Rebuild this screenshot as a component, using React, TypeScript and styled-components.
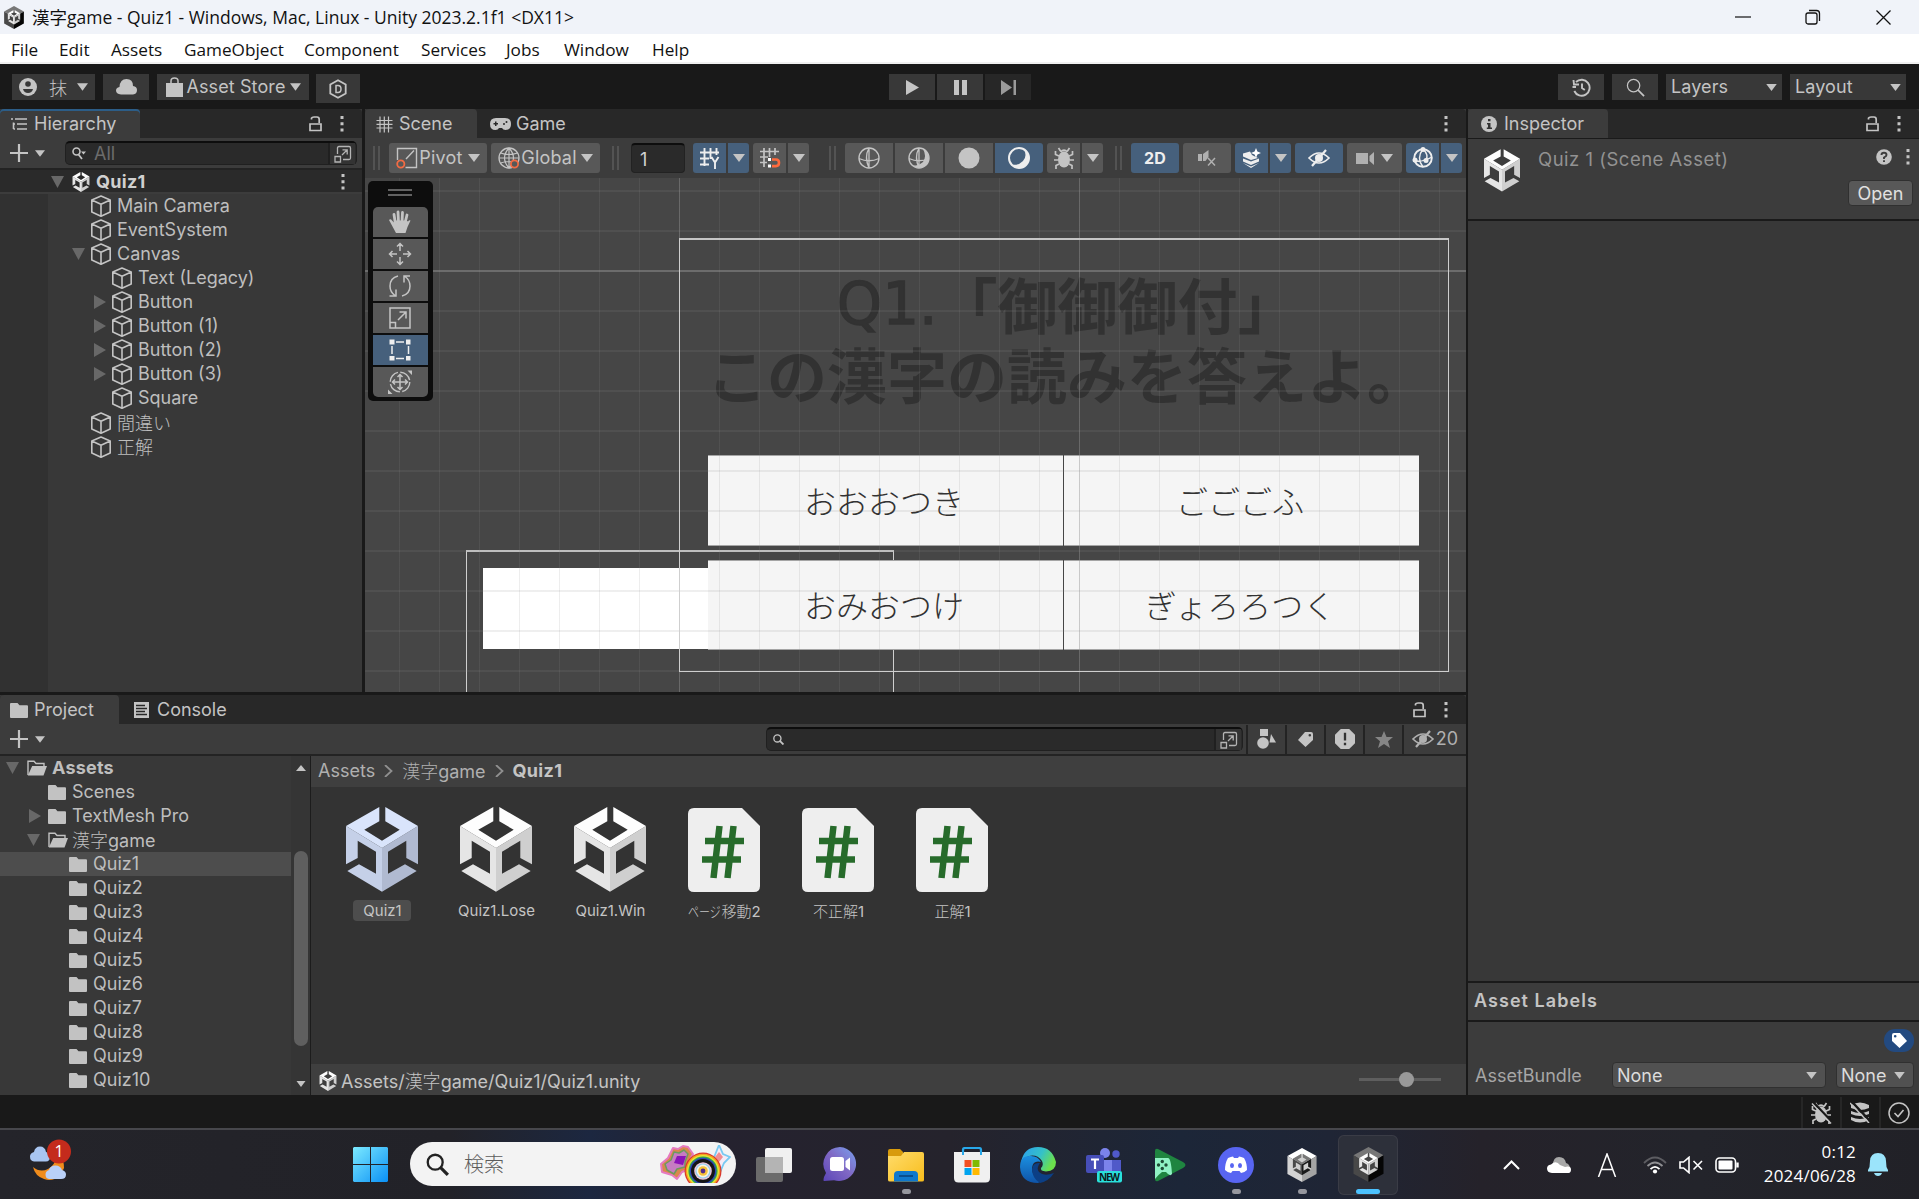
import React from "react";
import styled, { createGlobalStyle, css } from "styled-components";

const UI = `Inter, "Noto Sans CJK JP", sans-serif`;
const WIN = `"Open Sans", "Noto Sans CJK JP", sans-serif`;
const FG = "#c4c4c4";

const Global = createGlobalStyle`
  html, body { margin: 0; padding: 0; background: #191919; overflow: hidden; }
  * { box-sizing: border-box; }
  svg { display: block; flex: none; }
`;

const Screen = styled.div`
  width: 1919px;
  height: 1199px;
  display: flex;
  flex-direction: column;
  overflow: hidden;
  background: #191919;
  color: ${FG};
  font: 18px/24px ${UI};
  white-space: nowrap;
`;

/* ---------- icons ---------- */

type SvgProps = { w: number; h: number; vb?: string; children: React.ReactNode };
const Svg = ({ w, h, vb, children }: SvgProps) => (
  <svg width={w} height={h} viewBox={vb ?? `0 0 ${w} ${h}`} fill="none">
    {children}
  </svg>
);

const cubeTones = {
  blue: ["#d9e4fb", "#c5d0e8", "#b0bad1"],
  white: ["#fdfdfd", "#e5e5e5", "#cfcfcf"],
  dark: ["#777", "#4a4a4a", "#1a1a1a"],
};

const CubeShape = ({ tone }: { tone: keyof typeof cubeTones }) => {
  const [top, left, right] = cubeTones[tone];
  return (
    <>
      <path d="M0 19 36 41V84.7L1.3 64 13 57.3 30 66.7V44.7L11.7 33.7V51L0 57.3Z" fill={left} />
      <path d="M72 19 36 41V84.7L70.7 64 59 57.3 42 66.7V44.7L60.3 33.7V51L72 57.3Z" fill={right} />
      <path d="M33.3 0V14.3L18.3 22.7 36 33.7 53.7 22.7 39.3 14.3V0L72 19 36 41 0 19Z" fill={top} />
    </>
  );
};

const UnityCube = ({ w, h, tone = "white" }: { w: number; h: number; tone?: keyof typeof cubeTones }) => (
  <Svg w={w} h={h} vb="0 0 72 85"><CubeShape tone={tone} /></Svg>
);

const HexLogo = ({ w, h, light }: { w: number; h: number; light?: boolean }) => (
  <Svg w={w} h={h} vb="0 0 72 84">
    <path d="M36 0 72 20 36 42 0 20Z" fill={light ? "#fff" : "#777"} />
    <path d="M0 20 36 42V84L0 64Z" fill={light ? "#d4d4d4" : "#484848"} />
    <path d="M72 20 36 42V84L72 64Z" fill={light ? "#a4a4a4" : "#050505"} />
    <g transform="translate(13.5 14.5) scale(.625)">
      <path d="M0 19 36 0 72 19V64L36 85 0 64Z" fill={light ? "#cfcfcf" : "#444"} />
      <CubeShape tone={light ? "dark" : "white"} />
    </g>
  </Svg>
);

const Caret = ({ w = 12, h = 8, color = FG }: { w?: number; h?: number; color?: string }) => (
  <Svg w={w} h={h} vb="0 0 12 8"><path d="M0 0H12L6 8Z" fill={color} /></Svg>
);

const Fold = ({ open }: { open?: boolean }) =>
  open ? (
    <Svg w={13} h={12}><path d="M0 0H13L6.5 12Z" fill="#686868" /></Svg>
  ) : (
    <Svg w={13} h={14}><path d="M1 0 13 7 1 14Z" fill="#686868" /></Svg>
  );

const Dots = () => (
  <Svg w={4} h={16}><path d="M.5 0h3v3h-3zM.5 6.3h3v3h-3zM.5 12.6h3v3h-3z" fill={FG} /></Svg>
);

const Lock = () => (
  <Svg w={13} h={16}>
    <path d="M2.5 3.5V2.2Q3 1 5 1h3q2.2 0 2.2 2.4V7M1 8h11v6.5H1Z" stroke={FG} strokeWidth="1.7" />
  </Svg>
);

const ObjectCube = () => (
  <Svg w={20} h={22}>
    <path d="M10 1 19.200 5v12L10 21.200 .8 17V5ZM.8 5 10 9.200 19.200 5M10 9.200V21" stroke="#c4c4c4" strokeWidth="1.600" strokeLinejoin="round" />
  </Svg>
);

const Folder = () => (
  <Svg w={18} h={15}><path d="M1 0h6.5l2 2.3H17q1 0 1 1V14q0 1-1 1H1q-1 0-1-1V1q0-1 1-1Z" fill="#c2c2c2" /></Svg>
);

const FolderOpen = () => (
  <Svg w={20} h={16}>
    <path d="M1 15V1.2h6l2 2.3h8V6" stroke="#c2c2c2" strokeWidth="1.4" />
    <path d="M5.2 6H20l-3.5 9.5H.8Z" fill="#c2c2c2" />
  </Svg>
);

const Plus = () => (
  <Svg w={18} h={18}><path d="M9 0V18M0 9H18" stroke={FG} strokeWidth="2.2" /></Svg>
);

const Popout = () => (
  <Svg w={18} h={18}>
    <path d="M3.5 9V3q0-1.5 1.500-1.500H15q1.500 0 1.500 1.500V13q0 1.500-1.500 1.500H9M8 10l5-5M8.500 4.800H13.200V9.500M1 11.500h5.500V17H1Z" stroke="#b4b4b4" strokeWidth="1.3" />
  </Svg>
);

const Lens = ({ w, h = w, color = FG, sw = 1.6 }: { w: number; h?: number; color?: string; sw?: number }) => (
  <Svg w={w} h={h} vb="0 0 20 20">
    <circle cx="8" cy="8" r="6.500" stroke={color} strokeWidth={sw} />
    <path d="M12.500 12.500 19 19" stroke={color} strokeWidth={sw * 1.4} />
  </Svg>
);

const LensMenu = () => (
  <Svg w={14} h={13}>
    <circle cx="4.500" cy="4.500" r="3.500" stroke={FG} strokeWidth="1.600" />
    <path d="M6.500 7.500 10 12" stroke={FG} strokeWidth="1.800" />
    <path d="M9 4.500H14L11.500 7.500Z" fill={FG} />
  </Svg>
);

const HiddenEye = ({ color = FG }: { color?: string }) => (
  <Svg w={22} h={18}>
    <path d="M1 9Q11-1 21 9 11 19 1 9Z" stroke={color} strokeWidth="1.7" />
    <circle cx="11" cy="9" r="4" fill={color} />
    <path d="M4 17 18 1" stroke={color} strokeWidth="2.200" />
  </Svg>
);

const BugIcon = ({ slash }: { slash?: boolean }) => (
  <Svg w={22} h={22}>
    <ellipse cx="11" cy="12.500" rx="6" ry="8" fill={FG} />
    <path d="M7.500 5Q11 1.500 14.500 5M7.500 4 5.500 1M14.500 4 16.500 1M6 9 2.500 7.500V4M16 9 19.500 7.500V4M5.500 13H1M16.500 13H21M6 17 3 18.500V22M16 17 19 18.500V22" stroke={FG} strokeWidth="1.700" />
    {slash && <path d="M4 1 22 20" stroke="#191919" strokeWidth="2.500" />}
    {slash && <path d="M2 1.500 21 21.500" stroke={FG} strokeWidth="1.500" />}
  </Svg>
);

const GridGlyph = () => (
  <Svg w={17} h={17}><path d="M4 .5V16.500M12.500 .5V16.500M.5 4.500H16.500M.5 12H16.500M8.300 .5V16.500M.5 8.300H16.500" stroke={FG} strokeWidth="1.200" /></Svg>
);

const TagIcon = ({ flip, color = FG }: { flip?: boolean; color?: string }) => (
  <Svg w={17} h={17}>
    <path
      transform={flip ? "translate(17 0) scale(-1 1)" : undefined}
      fillRule="evenodd"
      d="M8 1h6q2 0 2 2v6l-7.500 7L1 9ZM11.500 4.300a1.300 1.300 0 1 0 2.600 0 1.300 1.300 0 1 0-2.600 0Z"
      fill={color}
    />
  </Svg>
);

const Globe = ({ mode }: { mode: "wire" | "half" | "solid" | "crescent" }) => (
  <Svg w={22} h={22}>
    {mode === "solid" ? (
      <circle cx="11" cy="11" r="10.500" fill={FG} />
    ) : (
      <>
        <circle cx="11" cy="11" r="10" stroke={mode === "crescent" ? "#eee" : FG} strokeWidth={mode === "crescent" ? 2 : 1.400} />
        {mode !== "crescent" && <path d="M11 1Q6 10 11 21M1 11.500Q11 16 21 11.500M11 1V21" stroke={FG} strokeWidth="1.300" />}
        {mode === "half" && <path d="M15 2Q19 9 15 15 9 20 4.500 18 8 21 11 21 20.500 20 21 11 20 4 15 2Z" fill={FG} />}
        {mode === "crescent" && <path d="M15 1.500Q20 8 15 14 10 19 4 17.500 7 21 11 21 20.500 20 21 11 20.500 4 15 1.500Z" fill="#eee" />}
      </>
    )}
  </Svg>
);

/* ---------- window chrome ---------- */

const TitleBar = styled.div`
  height: 34px;
  display: flex;
  align-items: center;
  background: #f0f3f9;
  color: #111;
  padding-left: 4px;
  font: 17.500px/34px ${WIN};
`;
const TitleText = styled.span`
  margin-left: 8px;
  flex: 1;
`;
const WindowControl = styled.div`
  width: 70px;
  display: flex;
  justify-content: center;
  padding-right: 2px;
`;
const MenuBar = styled.div`
  height: 30px;
  display: flex;
  gap: 22px;
  padding-left: 11px;
  background: #fff;
  border-bottom: 2px solid #f0f0f0;
  color: #111;
  font: 17.200px/31px ${WIN};
`;
const MenuItem = styled.span<{ $w: number }>`
  width: ${(p) => p.$w}px;
`;

const MainToolbar = styled.div`
  height: 45px;
  padding: 10px 0 0 12px;
  display: flex;
  align-items: flex-start;
`;
const ToolButton = styled.div<{ $w: number; $ml?: number; $h?: number; $dim?: boolean; $pad?: boolean }>`
  width: ${(p) => p.$w}px;
  height: ${(p) => p.$h ?? 26}px;
  margin-left: ${(p) => p.$ml ?? 0}px;
  background: ${(p) => (p.$dim ? "#272727" : "#383838")};
  display: flex;
  align-items: center;
  justify-content: ${(p) => (p.$pad ? "space-between" : "center")};
  padding: ${(p) => (p.$pad ? "0 5px" : "0")};
  letter-spacing: 0.100px;
  gap: 4px;
`;
const Cjk = styled.span`
  font-family: "Noto Sans CJK JP", sans-serif;
  font-weight: 300;
`;
const NarrowKana = styled(Cjk)`
  display: inline-block;
  width: 45px;
  margin-right: -12px;
  transform: scaleX(0.730);
  transform-origin: left;
`;

/* ---------- docking areas ---------- */

const Workspace = styled.div`
  height: 986px;
  display: grid;
  grid-template-columns: 1466px 451px;
  column-gap: 2px;
`;
const LeftColumn = styled.div`
  display: grid;
  grid-template-rows: 583px 400px;
  row-gap: 3px;
`;
const TopRow = styled.div`
  display: grid;
  grid-template-columns: 362px 1101px;
  column-gap: 3px;
`;
const Panel = styled.section`
  display: flex;
  flex-direction: column;
  min-width: 0;
  min-height: 0;
  background: #383838;
  overflow: hidden;
`;
const TabStrip = styled.div`
  height: 29px;
  flex: none;
  display: flex;
  background: #282828;
  border-radius: 4px 4px 0 0;
  padding-right: 13px;
`;
const Tab = styled.div<{ $w: number; $active?: boolean; $focus?: boolean; $gap?: number; $pl: number }>`
  width: ${(p) => p.$w}px;
  padding: 1px 0 0 ${(p) => p.$pl}px;
  display: flex;
  align-items: center;
  gap: ${(p) => p.$gap ?? 8}px;
  border-radius: 4px 4px 0 0;
  ${(p) => p.$active && css`background: #3c3c3c;`}
  ${(p) => p.$focus && css`box-shadow: inset 0 2px #2c5d87;`}
`;
const TabActions = styled.div`
  margin-left: auto;
  display: flex;
  align-items: center;
  gap: 16px;
`;

/* ---------- hierarchy ---------- */

const PanelToolbar = styled.div<{ $h: number; $pl: number }>`
  height: ${(p) => p.$h}px;
  flex: none;
  padding-left: ${(p) => p.$pl}px;
  display: flex;
  align-items: center;
  background: #3c3c3c;
  border-bottom: 2px solid #232323;
`;
const SearchField = styled.div<{ $w: number; $ml: number }>`
  width: ${(p) => p.$w}px;
  height: 24px;
  margin-left: ${(p) => p.$ml}px;
  display: flex;
  align-items: center;
  gap: 8px;
  padding: 0 4px 0 6px;
  background: #2a2a2a;
  border: 1px solid #202020;
  border-top: 2px solid #0d0d0d;
  border-radius: 5px;
  color: #6c6c6c;
`;
const SearchEnd = styled.div`
  margin: 0 -3px 0 auto;
  height: 21px;
  width: 27px;
  border-left: 2px solid #202020;
  background: #333;
  display: flex;
  align-items: center;
  justify-content: center;
`;
const Spaced = styled.span<{ $ml: number }>`
  margin-left: ${(p) => p.$ml}px;
  display: inline-flex;
`;
const HierarchyTree = styled.div`
  flex: 1;
  background: linear-gradient(90deg, #313131 48px, #383838 48px);
`;
const TreeRow = styled.div<{ $indent: number; $tall?: boolean; $selected?: boolean }>`
  height: ${(p) => (p.$tall ? 25 : 24)}px;
  padding-left: ${(p) => p.$indent}px;
  display: flex;
  align-items: center;
  color: #bebebe;
  ${(p) => p.$selected && css`background: #4d4d4d;`}
`;
const FoldSlot = styled.span<{ $w: number }>`
  width: ${(p) => p.$w}px;
  flex: none;
  display: flex;
`;
const RowLabel = styled.span<{ $ml?: number; $bold?: boolean; $ls?: number }>`
  margin-left: ${(p) => p.$ml ?? 6}px;
  font-weight: ${(p) => (p.$bold ? 700 : 400)};
  letter-spacing: ${(p) => p.$ls ?? 0}px;
`;
const SceneHeader = styled.div`
  height: 24px;
  flex: none;
  display: flex;
  align-items: center;
  padding: 1px 17px 0 51px;
  background: #2a2a2a;
  border-bottom: 2px solid #3c3c3c;
  color: #d0d0d0;
`;

/* ---------- scene ---------- */

const SceneTools = styled.div`
  height: 40px;
  flex: none;
  display: flex;
  align-items: center;
  padding: 0 0 0 8px;
  background: #3c3c3c;
`;
const Handle = styled.div<{ $ml?: number }>`
  width: 7px;
  height: 24px;
  margin-left: ${(p) => p.$ml ?? 0}px;
  border: solid #535353;
  border-width: 0 2px;
`;
const SceneButton = styled.div<{ $w: number; $ml: number; $on?: boolean; $r?: string; $gap?: number }>`
  width: ${(p) => p.$w}px;
  height: 30px;
  margin-left: ${(p) => p.$ml}px;
  border-radius: ${(p) => p.$r ?? "3px"};
  background: ${(p) => (p.$on ? "#46607c" : "#585858")};
  display: flex;
  align-items: center;
  justify-content: center;
  gap: ${(p) => p.$gap ?? 1}px;
  letter-spacing: 0.200px;
  flex: none;
`;
const NumberField = styled.div`
  width: 54px;
  height: 30px;
  margin-left: 12px;
  padding-left: 8px;
  border-radius: 4px;
  border: 1px solid #222;
  border-top: 2px solid #0d0d0d;
  background: #2a2a2a;
  color: #d2d2d2;
  line-height: 29px;
`;
const TwoD = styled.span`
  font-size: 16px;
  font-weight: 700;
  color: #eee;
`;
const SceneView = styled.div`
  flex: 1;
  position: relative;
  overflow: hidden;
  background: #464646;
`;
const at = css<{ $x: number; $y: number; $w: number; $h: number }>`
  position: absolute;
  left: ${(p) => p.$x}px;
  top: ${(p) => p.$y}px;
  width: ${(p) => p.$w}px;
  height: ${(p) => p.$h}px;
`;
const Outline = styled.div`
  ${at}
  border: 1px solid #cfcfcf;
  border-top: 2px solid #c6c6c6;
`;
const Sprite = styled.div`
  ${at}
  background: #fff;
`;
const AnswerButton = styled.div`
  ${at}
  background: #f5f5f5;
  border: 1px solid #a5a5a5;
  border-width: 1px 0;
  display: flex;
  align-items: center;
  justify-content: center;
  padding: 0 3px 2px 0;
  color: #323232;
  font: 300 32px/40px "Noto Sans CJK JP", sans-serif;
`;
const Question = styled.div`
  ${at}
  display: flex;
  flex-direction: column;
  align-items: center;
  color: #323232;
  font: 700 60px/70px "Noto Sans CJK JP", sans-serif;
`;
const QuestionLine = styled.div`
  height: 70px;
  display: flex;
`;
const Latin = styled.span`
  font: 400 58px/72px "DejaVu Sans", sans-serif;
  -webkit-text-stroke: 1.300px #323232;
`;
const GridOverlay = styled.div`
  position: absolute;
  inset: 0;
  background:
    linear-gradient(rgba(150, 150, 150, 0.4) 2px, transparent 2px) 0 92px / 100% 2000px no-repeat,
    linear-gradient(90deg, rgba(150, 150, 150, 0.35) 1px, transparent 1px) 314px 0 / 400px 100%,
    linear-gradient(rgba(140, 140, 140, 0.140) 2px, transparent 2px) 0 12px / 100% 40px,
    linear-gradient(90deg, rgba(140, 140, 140, 0.150) 1px, transparent 1px) 34px 0 / 40px 100%;
`;
const ToolPalette = styled.div`
  position: absolute;
  left: 3px;
  top: 3px;
  width: 65px;
  height: 220px;
  padding: 8px 5px 4px;
  border-radius: 5px;
  background: #0d0d0d;
  display: flex;
  flex-direction: column;
  gap: 2px;
`;
const Grip = styled.div`
  width: 24px;
  height: 7px;
  margin: 0 0 9px 15px;
  border: solid #626262;
  border-width: 2px 0;
`;
const PaletteTool = styled.div<{ $on?: boolean; $first?: boolean; $last?: boolean }>`
  height: 30px;
  display: flex;
  align-items: center;
  justify-content: center;
  padding-right: 2px;
  background: ${(p) => (p.$on ? "#46607c" : "#585858")};
  border-radius: ${(p) => (p.$first ? "5px 5px 0 0" : p.$last ? "0 0 5px 5px" : "0")};
`;

/* ---------- project ---------- */

const ProjectBody = styled.div`
  flex: 1;
  display: grid;
  grid-template-columns: 291px 20px 1fr;
  min-height: 0;
`;
const FolderTree = styled.div`
  overflow: hidden;
`;
const ScrollTrack = styled.div`
  display: flex;
  flex-direction: column;
  align-items: center;
  background: #353535;
  border-right: 1px solid #1c1c1c;
  padding: 9px 0 8px;
`;
const ScrollThumb = styled.div`
  width: 14px;
  height: 195px;
  border-radius: 7px;
  margin: 80px 0 auto;
  background: #5f5f5f;
`;
const Browser = styled.div`
  display: grid;
  grid-template-rows: 31px 1fr 31px;
  background: #333;
`;
const Crumbs = styled.div`
  display: flex;
  align-items: center;
  padding: 0 0 2px 7px;
  gap: 9px;
  background: #3f3f3f;
  color: #b0b0b0;
`;
const Strong = styled.span`
  font-weight: 700;
  letter-spacing: 0.300px;
  color: #c4c4c4;
`;
const AssetGrid = styled.div`
  display: flex;
  padding: 20px 0 0 14px;
`;
const Asset = styled.div`
  width: 114px;
  display: flex;
  flex-direction: column;
  align-items: center;
  gap: 8px;
`;
const AssetLabel = styled.span<{ $selected?: boolean }>`
  padding: 0 9px 0 10px;
  border-radius: 4px;
  font-size: 15px;
  line-height: 21px;
  background: ${(p) => (p.$selected ? "#4d4d4d" : "transparent")};
`;
const PathBar = styled.div`
  display: flex;
  align-items: center;
  padding: 3px 25px 0 8px;
  gap: 4px;
  background: #3f3f3f;
`;
const Slider = styled.div`
  width: 82px;
  height: 3px;
  margin: -3px 0 0 auto;
  padding-left: 40px;
  background: #5e5e5e;
  display: flex;
  align-items: center;
`;
const Knob = styled.div`
  width: 15px;
  height: 15px;
  border-radius: 50%;
  background: #999;
`;
const FilterButton = styled.div<{ $w: number }>`
  width: ${(p) => p.$w}px;
  height: 29px;
  flex: none;
  display: flex;
  align-items: center;
  justify-content: center;
  gap: 2px;
  border-left: 2px solid #232323;
  color: #b0b0b0;
`;

/* ---------- inspector ---------- */

const InspectorHeader = styled.div`
  height: 83px;
  flex: none;
  display: flex;
  background: #3c3c3c;
  border: solid #1a1a1a;
  border-width: 1px 0 2px 0;
  padding: 10px 0 0 16px;
`;
const InspectorTitle = styled.div`
  margin: -2px 0 0 18px;
  color: #929292;
  font-size: 18.500px;
  letter-spacing: 0.500px;
`;
const HeaderSide = styled.div`
  margin-left: auto;
  width: 71px;
  display: flex;
  flex-direction: column;
  gap: 15px;
`;
const HeaderIcons = styled.div`
  display: flex;
  justify-content: flex-end;
  gap: 14px;
  padding-right: 9px;
  height: 16px;
`;
const OpenButton = styled.div`
  width: 65px;
  height: 26px;
  border-radius: 4px;
  border: 1px solid #303030;
  background: #585858;
  color: #e0e0e0;
  text-align: center;
  line-height: 26px;
`;
const InspectorSpace = styled.div`
  flex: 1;
`;
const LabelsHeader = styled.div`
  height: 41px;
  border: solid #1a1a1a;
  border-width: 2px 0;
  background: #3c3c3c;
  padding-left: 6px;
  font-weight: 600;
  letter-spacing: 1.050px;
  line-height: 36px;
`;
const LabelsBody = styled.div`
  height: 73px;
  background: #3c3c3c;
  padding: 7px 5px 0 7px;
  display: flex;
  flex-direction: column;
`;
const TagBadge = styled.div`
  width: 30px;
  height: 23px;
  align-self: flex-end;
  border-radius: 11px;
  background: #234a80;
  display: flex;
  align-items: center;
  justify-content: center;
`;
const BundleRow = styled.div`
  display: flex;
  align-items: center;
  margin-top: 10px;
  color: #a6a6a6;
`;
const Select = styled.div<{ $w: number; $ml: number }>`
  width: ${(p) => p.$w}px;
  margin-left: ${(p) => p.$ml}px;
  height: 26px;
  border: 1px solid #303030;
  border-radius: 4px;
  background: #515151;
  color: #dcdcdc;
  display: flex;
  align-items: center;
  justify-content: space-between;
  padding: 1px 8px 0 4px;
`;
const BundleName = styled.span`
  width: 106px;
  padding-top: 2px;
`;

const StatusBar = styled.div`
  height: 35px;
  flex: none;
  display: flex;
  justify-content: flex-end;
  border-bottom: 2px solid #47474c;
  padding: 2px 1px 0 0;
`;
const StatusCell = styled.div`
  width: 39px;
  display: flex;
  align-items: center;
  justify-content: center;
  padding-right: 2px;
  border-left: 2px solid #262626;
`;

/* ---------- taskbar ---------- */

const Taskbar = styled.div`
  height: 69px;
  flex: none;
  display: flex;
  align-items: center;
  background: linear-gradient(90deg, #24242a 0, #222228 450px, #1c2740 590px, #25222f 720px, #25232c 950px, #1c2638 1180px, #1f2535 1330px, #25222a 1480px, #23242b 1700px, #212127 1919px);
  color: #fff;
`;
const WeatherSlot = styled.div`
  width: 337px;
  height: 60px;
  padding: 3px 0 0 30px;
  display: flex;
`;
const TaskSlot = styled.div<{ $w?: number }>`
  width: ${(p) => p.$w ?? 66}px;
  height: 60px;
  padding-top: 6px;
  display: grid;
  grid-template-rows: 48px 5px;
  justify-items: center;
  align-items: center;
`;
const ActiveSlot = styled(TaskSlot)`
  width: 60px;
  margin: 0 3px;
  border-radius: 6px;
  background: #2d303a;
  box-shadow: inset 0 0 0 1px #3a3c46;
`;
const RunMark = styled.div<{ $active?: boolean }>`
  width: ${(p) => (p.$active ? 24 : 9)}px;
  height: 5px;
  border-radius: 3px;
  background: ${(p) => (p.$active ? "#4cc2ff" : "#96979e")};
`;
const SearchPill = styled.div`
  width: 326px;
  height: 44px;
  margin: 0 5px 1px 6px;
  border-radius: 22px;
  background: #f3f3f3;
  display: flex;
  align-items: center;
  padding: 0 5px 0 16px;
  color: #5c5c5c;
  font: 300 20px/44px "Noto Sans CJK JP", sans-serif;
`;
const PillText = styled.span`
  margin: 0 auto 0 15px;
`;
const TrayCell = styled.div<{ $w: number; $ml?: number }>`
  width: ${(p) => p.$w}px;
  margin-left: ${(p) => p.$ml ?? 0}px;
  display: flex;
  justify-content: center;
`;
const Clock = styled.div`
  width: 111px;
  text-align: right;
  padding-bottom: 2px;
  font: 17px/24px ${WIN};
  letter-spacing: 0.200px;
`;

/* ---------- data ---------- */

const menu: [string, number][] = [
  ["File", 26], ["Edit", 30], ["Assets", 51], ["GameObject", 98], ["Component", 95],
  ["Services", 63], ["Jobs", 36], ["Window", 66], ["Help", 40],
];

type Node = { label: string; depth: number; fold?: "open" | "closed"; cjk?: boolean; tall?: boolean };
const nodes: Node[] = [
  { label: "Main Camera", depth: 0 },
  { label: "EventSystem", depth: 0 },
  { label: "Canvas", depth: 0, fold: "open" },
  { label: "Text (Legacy)", depth: 1 },
  { label: "Button", depth: 1, fold: "closed" },
  { label: "Button (1)", depth: 1, fold: "closed" },
  { label: "Button (2)", depth: 1, fold: "closed" },
  { label: "Button (3)", depth: 1, fold: "closed" },
  { label: "Square", depth: 1 },
  { label: "間違い", depth: 0, cjk: true, tall: true },
  { label: "正解", depth: 0, cjk: true },
];

const quizFolders = Array.from({ length: 10 }, (_, i) => `Quiz${i + 1}`);

const assets: { label: React.ReactNode; kind: "scene" | "script"; selected?: boolean }[] = [
  { label: "Quiz1", kind: "scene", selected: true },
  { label: "Quiz1.Lose", kind: "scene" },
  { label: "Quiz1.Win", kind: "scene" },
  { label: <><NarrowKana>ページ</NarrowKana><Cjk>移動</Cjk>2</>, kind: "script" },
  { label: <><Cjk>不正解</Cjk>1</>, kind: "script" },
  { label: <><Cjk>正解</Cjk>1</>, kind: "script" },
];

const rings: [string, number][] = [
  ["#d8352d", 18.5], ["#f5a11e", 17.3], ["#e8e337", 16], ["#35a84c", 14.6], ["#2d45b8", 13.3],
  ["#151515", 12], ["#f2c4d8", 8.8], ["#8fd0f0", 7.6], ["#f7f3e6", 6.4], ["#f5c23c", 4.8], ["#512b8c", 2.4],
];

/* ---------- sections ---------- */

const TopToolbar = () => (
  <MainToolbar>
    <ToolButton $w={83}>
      <Svg w={18} h={18}>
        <circle cx="9" cy="9" r="9" fill={FG} />
        <circle cx="9" cy="6" r="2.800" fill="#383838" />
        <path d="M4 11h10q-1 4-5 4t-5-4Z" fill="#383838" />
      </Svg>
      <Spaced $ml={8}><Cjk>抹</Cjk></Spaced>
      <Spaced $ml={6}><Caret w={11} /></Spaced>
    </ToolButton>
    <ToolButton $w={46} $ml={8}>
      <Svg w={21} h={16}><path d="M5 15.500Q0 15 0 11.500 0 8.500 3.500 8 4 0 10.500 0 17 0 17 7q4 .5 4 4 0 4-4 4.500Z" fill={FG} /></Svg>
    </ToolButton>
    <ToolButton $w={152} $ml={8}>
      <Svg w={17} h={20}><path d="M0 6H17V20H0Z" fill={FG} /><path d="M5 9V4q0-3 3.500-3T12 4V9" stroke={FG} strokeWidth="1.500" /></Svg>
      <span>Asset Store</span>
      <Caret w={11} />
    </ToolButton>
    <ToolButton $w={44} $ml={7} $h={29}>
      <Svg w={18} h={20}>
        <path d="M9 1.200 16.700 5.500v9L9 18.800 1.300 14.500v-9Z" stroke={FG} strokeWidth="1.800" />
        <path d="M7 6.500h2q3 0 3 3.500t-3 3.500H7Z" stroke={FG} strokeWidth="1.500" />
      </Svg>
    </ToolButton>
    <ToolButton $w={46} $ml={529}><Svg w={13} h={15}><path d="M0 0 13 7.500 0 15Z" fill={FG} /></Svg></ToolButton>
    <ToolButton $w={46} $ml={2}><Svg w={13} h={15}><path d="M0 0h5v15H0ZM8 0h5v15H8Z" fill={FG} /></Svg></ToolButton>
    <ToolButton $w={46} $ml={2} $dim><Svg w={15} h={15}><path d="M0 0 11 7.500 0 15ZM12.500 0H15v15h-2.500Z" fill="#9a9a9a" /></Svg></ToolButton>
    <ToolButton $w={46} $ml={527}>
      <Svg w={19} h={19}><path d="M4 4A8 8 0 1 1 2.300 13M1.500 2 2 6.500H7M.5 9H4M10 5.500V10L12.800 12" stroke={FG} strokeWidth="1.900" /></Svg>
    </ToolButton>
    <ToolButton $w={46} $ml={8}><Lens w={19} sw={1.300} /></ToolButton>
    <ToolButton $w={116} $ml={8} $pad>Layers<Caret w={11} h={7} /></ToolButton>
    <ToolButton $w={116} $ml={8} $pad>Layout<Caret w={11} h={7} /></ToolButton>
  </MainToolbar>
);

const Hierarchy = () => (
  <Panel>
    <TabStrip>
      <Tab $w={140} $pl={11} $active $focus $gap={7}>
        <Svg w={16} h={14}><path d="M4 2H16M6 7H16M6 12H16M0 2H2M2.500 5.500V12M2.500 7H4M2.500 12H4" stroke={FG} strokeWidth="1.600" /></Svg>
        Hierarchy
      </Tab>
      <TabActions><Lock /><Spaced $ml={2}><Dots /></Spaced></TabActions>
      <Spaced $ml={5} />
    </TabStrip>
    <PanelToolbar $h={32} $pl={10}>
      <Plus />
      <Spaced $ml={7}><Caret w={10} h={7} /></Spaced>
      <SearchField $w={292} $ml={20}>
        <LensMenu />
        All
        <SearchEnd><Popout /></SearchEnd>
      </SearchField>
    </PanelToolbar>
    <SceneHeader>
      <FoldSlot $w={21}><Fold open /></FoldSlot>
      <UnityCube w={18} h={20} />
      <RowLabel $bold $ls={0.3}>Quiz1</RowLabel>
      <TabActions><Dots /></TabActions>
    </SceneHeader>
    <HierarchyTree>
      {nodes.map((n) => (
        <TreeRow key={n.label} $indent={72 + n.depth * 21} $tall={n.tall}>
          <FoldSlot $w={19}>{n.fold && <Fold open={n.fold === "open"} />}</FoldSlot>
          <ObjectCube />
          <RowLabel>{n.cjk ? <Cjk>{n.label}</Cjk> : n.label}</RowLabel>
        </TreeRow>
      ))}
    </HierarchyTree>
  </Panel>
);

const SceneToolbar = () => (
  <SceneTools>
    <Handle />
    <SceneButton $w={98} $ml={9}>
      <Svg w={22} h={22}>
        <path d="M1.500 13V1.500H20.500V20.500H9.500M10 12 18 3.500" stroke={FG} strokeWidth="1.400" />
        <circle cx="4.800" cy="17" r="3.600" stroke="#f26b43" strokeWidth="1.800" />
      </Svg>
      Pivot<Spaced $ml={4}><Caret /></Spaced>
    </SceneButton>
    <SceneButton $w={109} $ml={4}>
      <Svg w={22} h={22}>
        <circle cx="11" cy="11" r="10" stroke={FG} strokeWidth="1.300" />
        <path d="M1 11H21M11 1V21M2.500 6Q11 9 19.500 6M2.500 16Q11 13 19.500 16M11 1Q2 11 11 21M11 1Q20 11 11 21" stroke={FG} strokeWidth="1.200" />
        <circle cx="16.500" cy="17" r="3.600" stroke="#f26b43" strokeWidth="1.800" fill="#585858" />
      </Svg>
      Global<Spaced $ml={3}><Caret /></Spaced>
    </SceneButton>
    <Handle $ml={12} />
    <NumberField>1</NumberField>
    <SceneButton $w={33} $ml={8} $on $r="3px 0 0 3px">
      <Svg w={22} h={22}><path d="M5.500 1V19M11.500 1V12M17.500 1V8M1 5.500H20M1 11.500H10M1 17.500H10M12.500 10 16 15.500 19.500 10M16 15.500V22" stroke="#eee" strokeWidth="1.900" /></Svg>
    </SceneButton>
    <SceneButton $w={21} $ml={2} $on $r="0 3px 3px 0"><Caret /></SceneButton>
    <SceneButton $w={33} $ml={4} $r="3px 0 0 3px">
      <Svg w={22} h={22}>
        <path d="M5 1V20M10.500 1V10M16 1V8M1 4.500H20M1 10H9M1 15.500H8" stroke={FG} strokeWidth="1.700" />
        <path d="M13 12.500h4q3 0 3 3.300t-3 3.300h-4" stroke="#ff6a3d" strokeWidth="2.600" />
        <path d="M9 11h3v3H9ZM9 17.500h3v3H9Z" fill="#fff" />
      </Svg>
    </SceneButton>
    <SceneButton $w={21} $ml={2} $r="0 3px 3px 0"><Caret /></SceneButton>
    <Handle $ml={20} />
    <SceneButton $w={48} $ml={9} $r="3px 0 0 3px"><Globe mode="wire" /></SceneButton>
    <SceneButton $w={48} $ml={2} $r="0"><Globe mode="half" /></SceneButton>
    <SceneButton $w={48} $ml={2} $r="0"><Globe mode="solid" /></SceneButton>
    <SceneButton $w={48} $ml={2} $on $r="0 3px 3px 0"><Globe mode="crescent" /></SceneButton>
    <SceneButton $w={33} $ml={4} $r="3px 0 0 3px"><BugIcon /></SceneButton>
    <SceneButton $w={21} $ml={2} $r="0 3px 3px 0"><Caret /></SceneButton>
    <Handle $ml={12} />
    <SceneButton $w={48} $ml={9} $on><TwoD>2D</TwoD></SceneButton>
    <SceneButton $w={48} $ml={4}>
      <Svg w={18} h={17}><path d="M0 4h4v7H0ZM5 4 10.500 0V7L7.500 11H5Z" fill="#b0b0b0" /><path d="M10 8 17 15.500M17 8 10 15.500" stroke="#b0b0b0" strokeWidth="1.500" /></Svg>
    </SceneButton>
    <SceneButton $w={33} $ml={4} $on $r="3px 0 0 3px">
      <Svg w={20} h={20}>
        <path d="M1 5.500 8 3.500 10 7 16 10 9 12 1 8.500ZM1 10.500l8 3 8-3v3L9 17 1 13.500ZM1 15l8 3.500L17 15 9 20Z" fill="#eee" />
        <path d="M14 0l1.400 3.600L19 5l-3.600 1.400L14 10l-1.400-3.600L9 5l3.600-1.400Z" fill="#fff" />
      </Svg>
    </SceneButton>
    <SceneButton $w={21} $ml={2} $on $r="0 3px 3px 0"><Caret /></SceneButton>
    <SceneButton $w={48} $ml={4} $on><HiddenEye color="#eee" /></SceneButton>
    <SceneButton $w={55} $ml={4} $gap={7}>
      <Svg w={18} h={13}><path d="M0 1h12v11H0ZM13.500 4 18 0V13L13.500 9Z" fill="#b0b0b0" /></Svg>
      <Caret />
    </SceneButton>
    <SceneButton $w={33} $ml={4} $on $r="3px 0 0 3px">
      <Svg w={22} h={22}>
        <circle cx="11" cy="11" r="8.800" stroke="#eee" strokeWidth="1.900" />
        <path d="M11 2Q4 11 11 20M11 2Q17 8 14 13M2 13.500Q9 16 20 10" stroke="#eee" strokeWidth="1.400" />
        <circle cx="11" cy="2.500" r="2.500" fill="#eee" /><circle cx="3" cy="13" r="2.500" fill="#eee" /><circle cx="14" cy="13.500" r="2.500" fill="#eee" />
      </Svg>
    </SceneButton>
    <SceneButton $w={21} $ml={2} $on $r="0 3px 3px 0"><Caret /></SceneButton>
  </SceneTools>
);

const Palette = () => (
  <ToolPalette>
    <Grip />
    <PaletteTool $first>
      <Svg w={24} h={24}>
        <path d="M7.500 14 6 4.500M10.500 12 10 2M14 12 14.500 2.500M17 13 19 5" stroke={FG} strokeWidth="2.800" strokeLinecap="round" />
        <path d="M1 10Q2.500 8.500 4 10.500L6.500 13V10.500H18.300L20 11.500Q21.500 9.500 22.500 10.500L19.500 17 17.500 23H8Z" fill={FG} />
      </Svg>
    </PaletteTool>
    <PaletteTool>
      <Svg w={24} h={24}><path d="M12 9V2M9 4.500 12 1.500 15 4.500M12 15V22M9 19.500 12 22.500 15 19.500M9 12H2M4.500 9 1.500 12 4.500 15M15 12H22M19.500 9 22.500 12 19.500 15" stroke={FG} strokeWidth="1.500" /></Svg>
    </PaletteTool>
    <PaletteTool>
      <Svg w={24} h={24}><path d="M10 2Q2 4 2 12 2 18 7 21.500M1.500 22H8V15.500M14 22Q22 20 22 12 22 6 17 2.500M22 2H16V8.500" stroke={FG} strokeWidth="1.500" /></Svg>
    </PaletteTool>
    <PaletteTool>
      <Svg w={22} h={22}><path d="M1 1H21V21H1ZM1 15.500H6.500V21M9 13 16.500 5.500M10.500 5H17V11.500" stroke={FG} strokeWidth="1.500" /></Svg>
    </PaletteTool>
    <PaletteTool $on>
      <Svg w={22} h={22}><path d="M7 3H15M7 19.500H15M3 7V15M19.500 7V15" stroke="#eee" strokeWidth="1.500" /><path d="M.5 .5h5v5h-5ZM17 .5h4.500v5H17ZM.5 17h5v4.500h-5ZM17 17h4.500v4.500H17Z" fill="#eee" /></Svg>
    </PaletteTool>
    <PaletteTool $last>
      <Svg w={24} h={24}>
        <circle cx="12" cy="12" r="9.800" stroke={FG} strokeWidth="1.400" strokeDasharray="13 2.400" />
        <path d="M12 5V19M5 12H19M9.500 7 12 4.500 14.500 7M9.500 17 12 19.500 14.500 17M7 9.500 4.500 12 7 14.500M17 9.500 19.500 12 17 14.500" stroke={FG} strokeWidth="1.500" />
        <path d="M19.500 .5H24V5ZM0 19.500V24H4.500Z" fill={FG} />
      </Svg>
    </PaletteTool>
  </ToolPalette>
);

const Scene = () => (
  <Panel>
    <TabStrip>
      <Tab $w={112} $pl={11} $active $gap={6}><GridGlyph />Scene</Tab>
      <Tab $w={120} $pl={13} $gap={5}>
        <Svg w={21} h={12}>
          <path fillRule="evenodd" d="M6 0H15Q21 0 21 6T15.500 12Q13 12 12 10H9Q8 12 5.500 12 0 12 0 6T6 0ZM5 3.500V5H3.500V6.500H5V8H6.500V6.500H8V5H6.500V3.500ZM13 6a1 1 0 0 0 2 0 1 1 0 0 0-2 0ZM15.500 4a1 1 0 0 0 2 0 1 1 0 0 0-2 0Z" fill={FG} />
        </Svg>
        Game
      </Tab>
      <TabActions><Dots /></TabActions>
      <Spaced $ml={5} />
    </TabStrip>
    <SceneToolbar />
    <SceneView>
      <Sprite $x={118} $y={390} $w={226} $h={81} />
      <Outline $x={101} $y={372} $w={428} $h={200} />
      <Question $x={317} $y={90} $w={770} $h={140}>
        <QuestionLine><Latin>Q1.</Latin>「御御御付」</QuestionLine>
        <QuestionLine>この漢字の読みを答えよ。</QuestionLine>
      </Question>
      <AnswerButton $x={343} $y={277} $w={355} $h={91}>おおおつき</AnswerButton>
      <AnswerButton $x={699} $y={277} $w={355} $h={91}>ごごごふ</AnswerButton>
      <AnswerButton $x={343} $y={382} $w={355} $h={90}>おみおつけ</AnswerButton>
      <AnswerButton $x={699} $y={382} $w={355} $h={90}>ぎょろろつく</AnswerButton>
      <GridOverlay />
      <Outline $x={314} $y={60} $w={770} $h={434} />
      <Palette />
    </SceneView>
  </Panel>
);

const ScriptIcon = () => (
  <Svg w={72} h={85}>
    <path d="M6 1H54L72 19V79Q72 85 66 85H6Q0 85 0 79V7Q0 1 6 1Z" fill="#eee" />
    <path d="M31.500 19 25.500 71M45.500 19 39.500 71M17 34H56M14 52.500H53" stroke="#276b2b" strokeWidth="6.500" />
  </Svg>
);

const CrumbArrow = () => (
  <Svg w={9} h={12}><path d="M1 0 7.500 6 1 12" stroke="#909090" strokeWidth="1.800" /></Svg>
);

const Project = () => (
  <Panel>
    <TabStrip>
      <Tab $w={119} $pl={10} $active $gap={6}><Folder />Project</Tab>
      <Tab $w={150} $pl={15} $gap={8}>
        <Svg w={15} h={16}><path d="M0 0H15V16H0Z" fill={FG} /><path d="M2 3.500H11M2 6.500H13M2 9.500H11M2 12.500H13" stroke="#282828" strokeWidth="1.300" /></Svg>
        Console
      </Tab>
      <TabActions><Lock /><Spaced $ml={2}><Dots /></Spaced></TabActions>
      <Spaced $ml={5} />
    </TabStrip>
    <PanelToolbar $h={32} $pl={10}>
      <Plus />
      <Spaced $ml={7}><Caret w={10} h={7} /></Spaced>
      <SearchField $w={477} $ml={721}>
        <Lens w={11} sw={2.400} />
        <SearchEnd><Popout /></SearchEnd>
      </SearchField>
      <Spaced $ml={3} />
      <FilterButton $w={39}>
        <Svg w={19} h={20}><path d="M3 0h8v7H3ZM14 5l5 8.500h-6.500Z" fill={FG} /><circle cx="6" cy="14" r="5.800" fill={FG} /></Svg>
      </FilterButton>
      <FilterButton $w={39}><TagIcon /></FilterButton>
      <FilterButton $w={39}>
        <Svg w={20} h={20} vb="0 0 19 19"><path d="M5.500 0h8L19 5.500v8L13.500 19h-8L0 13.500v-8Z" fill={FG} /><path d="M9.500 3.500V11M9.500 13V15.500" stroke="#333" strokeWidth="2.200" /></Svg>
      </FilterButton>
      <FilterButton $w={39}>
        <Svg w={18} h={17}><path d="M9 0 11.500 6H18L13 10.200 15 17 9 13 3 17 5 10.200 0 6H6.500Z" fill="#858585" /></Svg>
      </FilterButton>
      <FilterButton $w={64}><HiddenEye color="#b0b0b0" />20</FilterButton>
    </PanelToolbar>
    <ProjectBody>
      <FolderTree>
        <TreeRow $indent={6}>
          <FoldSlot $w={21}><Fold open /></FoldSlot><FolderOpen /><RowLabel $ml={5} $bold $ls={0.2}>Assets</RowLabel>
        </TreeRow>
        <TreeRow $indent={48}><Folder /><RowLabel>Scenes</RowLabel></TreeRow>
        <TreeRow $indent={28}><FoldSlot $w={20}><Fold /></FoldSlot><Folder /><RowLabel>TextMesh Pro</RowLabel></TreeRow>
        <TreeRow $indent={27}>
          <FoldSlot $w={21}><Fold open /></FoldSlot><FolderOpen /><RowLabel $ml={4}><Cjk>漢字</Cjk>game</RowLabel>
        </TreeRow>
        {quizFolders.map((f, i) => (
          <TreeRow key={f} $indent={69} $selected={i === 0}><Folder /><RowLabel>{f}</RowLabel></TreeRow>
        ))}
      </FolderTree>
      <ScrollTrack>
        <Svg w={10} h={6}><path d="M0 6 5 0 10 6Z" fill={FG} /></Svg>
        <ScrollThumb />
        <Caret w={10} h={6} />
      </ScrollTrack>
      <Browser>
        <Crumbs>
          Assets
          <CrumbArrow />
          <span><Cjk>漢字</Cjk>game</span>
          <CrumbArrow />
          <Strong>Quiz1</Strong>
        </Crumbs>
        <AssetGrid>
          {assets.map((a, i) => (
            <Asset key={i}>
              {a.kind === "scene" ? <UnityCube w={72} h={85} tone={a.selected ? "blue" : "white"} /> : <ScriptIcon />}
              <AssetLabel $selected={a.selected}>{a.label}</AssetLabel>
            </Asset>
          ))}
        </AssetGrid>
        <PathBar>
          <UnityCube w={18} h={20} />
          <span>Assets/<Cjk>漢字</Cjk>game/Quiz1/Quiz1.unity</span>
          <Slider><Knob /></Slider>
        </PathBar>
      </Browser>
    </ProjectBody>
  </Panel>
);

const Inspector = () => (
  <Panel>
    <TabStrip>
      <Tab $w={140} $pl={13} $active $gap={7}>
        <Svg w={16} h={16}><circle cx="8" cy="8" r="8" fill={FG} /><path d="M7 3h2.500v2.200H7ZM6 7h3.500v4.500H11V13H5.800v-1.500H7V8.500H6Z" fill="#333" /></Svg>
        Inspector
      </Tab>
      <TabActions><Lock /><Spaced $ml={2}><Dots /></Spaced></TabActions>
      <Spaced $ml={5} />
    </TabStrip>
    <InspectorHeader>
      <UnityCube w={36} h={43} />
      <InspectorTitle>Quiz 1 (Scene Asset)</InspectorTitle>
      <HeaderSide>
        <HeaderIcons>
          <Svg w={16} h={16}><circle cx="8" cy="8" r="7.800" fill={FG} /><path d="M5.500 6Q5.500 3.700 8 3.700T10.500 6Q10.500 7.200 8 8.500V10M8 11.200V13" stroke="#3c3c3c" strokeWidth="1.900" /></Svg>
          <Dots />
        </HeaderIcons>
        <OpenButton>Open</OpenButton>
      </HeaderSide>
    </InspectorHeader>
    <InspectorSpace />
    <LabelsHeader>Asset Labels</LabelsHeader>
    <LabelsBody>
      <TagBadge><TagIcon flip color="#fff" /></TagBadge>
      <BundleRow>
        <BundleName>AssetBundle</BundleName>
        <Select $w={214} $ml={31}>None<Caret w={11} h={7} /></Select>
        <Select $w={78} $ml={10}>None<Caret w={11} h={7} /></Select>
      </BundleRow>
    </LabelsBody>
  </Panel>
);

const Weather = () => (
  <Svg w={42} h={54}>
    <path d="M26 20Q35 22 34 30L30 38Q22 44 14 41 5 38 3 29 10 35 18 31 25 27 26 20Z" fill="#f08c1c" />
    <path d="M4 23.500Q0 23 0 18.500 0 15 4 14 5 8.500 10 8.500 15 8.500 16 14 20 15 20 18.500 20 23.500 16 23.500Z" fill="#a9c6f2" />
    <path d="M19 41Q15.500 40.500 15.500 36.500 15.500 33 19 32 20 27.500 25.500 27.500 30.500 27.500 32 32 36 33 36 36.500 36 41 31 41Z" fill="#b9d0f8" />
    <circle cx="29" cy="13.500" r="12" fill="#c42b1c" />
    <text x="29" y="19" textAnchor="middle" fill="#fff" fontFamily="Open Sans, sans-serif" fontSize="16">1</text>
  </Svg>
);

const SearchArt = () => (
  <Svg w={72} h={38}>
    <path d="M14 3 19 4 24 1 29 2 34 9 30 16 31 24 23 27 18 34 13 30 3 27 2 19 9 13Z" fill="#d9874d" stroke="#e67ac0" strokeWidth="2" strokeLinejoin="round" />
    <path d="M15 7 20 8 25 5 29 9 26 17 26 22 18 24 15 29 8 25 6 19 12 15Z" fill="#c67cc2" stroke="#6d9a5c" strokeWidth="1.500" strokeLinejoin="round" />
    <path d="M18 11 27 11 25 17 24 20 15 18Z" fill="#8a14b8" />
    <path d="M60 0 64 9 71 12 65 18 62 25 54 15Z" fill="#f5eaf5" stroke="#78c9f2" strokeWidth="1.800" />
    <path d="M60 7 64 12 60 17 56 12Z" fill="#f08d93" />
    {rings.map(([c, r]) => <circle key={c} cx="44" cy="26" r={r} fill={c} />)}
  </Svg>
);

const taskIcons: { icon: React.ReactNode; running?: boolean }[] = [
  {
    icon: (
      <Svg w={36} h={34}>
        <rect x="9" y="0" width="27" height="25" rx="2" fill="#f0f0f0" />
        <rect x="0" y="9" width="27" height="25" rx="2" fill="#6b6b6b" />
        <rect x="9" y="9" width="18" height="16" fill="#b4b4b4" />
      </Svg>
    ),
  },
  {
    icon: (
      <Svg w={34} h={35}>
        <defs><linearGradient id="chat" x1="0" y1="1" x2="1" y2="0"><stop stopColor="#5b45b8" /><stop offset=".5" stopColor="#8068c4" /><stop offset="1" stopColor="#78a2f0" /></linearGradient></defs>
        <path d="M17 0A17 17 0 1 1 11 33.200L1 34Q0 34 1 30L3 26A17 17 0 0 1 17 0Z" fill="url(#chat)" />
        <rect x="7" y="10" width="14" height="14" rx="2.500" fill="#fff" />
        <path d="M22.500 14 27 10.500V23.500L22.500 20Z" fill="#fff" />
      </Svg>
    ),
  },
  {
    running: true,
    icon: (
      <Svg w={36} h={34}>
        <defs><linearGradient id="fold" x2="1" y2="1"><stop stopColor="#ffdc6b" /><stop offset="1" stopColor="#f8bd1c" /></linearGradient></defs>
        <path d="M2 1H12L15 4V9H0V3Q0 1 2 1Z" fill="#d89b0c" />
        <path d="M0 8H13L16 4H34Q36 4 36 6V32Q36 33.500 34 33.500H2Q0 33.500 0 32Z" fill="url(#fold)" />
        <path d="M6 33.500V27Q6 23 10 23H26Q30 23 30 27V33.500Z" fill="#0f78cc" />
        <path d="M11 28H25" stroke="#0b4a86" strokeWidth="1.800" />
      </Svg>
    ),
  },
  {
    icon: (
      <Svg w={36} h={36}>
        <path d="M9 8V2.500Q9 1 11 1H25Q27 1 27 2.500V8" stroke="#28a8ea" strokeWidth="2.200" />
        <path d="M0 5H36V31Q36 35.500 31.500 35.500H4.500Q0 35.500 0 31Z" fill="#f0f0f0" />
        <path d="M9 4V8M27 4V8" stroke="#28a8ea" strokeWidth="2" />
        <path d="M10.500 13h7v7h-7Z" fill="#f25022" /><path d="M18.500 13h7v7h-7Z" fill="#7fba00" /><path d="M10.500 21h7v7h-7Z" fill="#00a4ef" /><path d="M18.500 21h7v7h-7Z" fill="#ffb900" />
      </Svg>
    ),
  },
  {
    icon: (
      <Svg w={36} h={36}>
        <defs>
          <linearGradient id="ea" x2="1" y2=".4"><stop stopColor="#2a9df0" /><stop offset=".6" stopColor="#35c1c8" /><stop offset="1" stopColor="#6be04c" /></linearGradient>
          <linearGradient id="eb" x2="0" y2="1"><stop stopColor="#1b8fe0" /><stop offset="1" stopColor="#0f54a8" /></linearGradient>
        </defs>
        <path d="M1 15Q4 0 18 0T36 15Q36 24 26 24.500 20 24 21 21 24 18 22 14 17 7 9 9 3 11 1 15Z" fill="url(#ea)" />
        <path d="M0 20Q0 8 11 9 18 9 21 15 13 13 12 21 12 29 20 35L18 36Q1 36 0 20Z" fill="url(#eb)" />
        <path d="M12 22Q13 15 20 16 16 21 19 25 24 30 34 26 29 34 20 36 12 31 12 22Z" fill="#0c3f85" />
      </Svg>
    ),
  },
  {
    icon: (
      <Svg w={36} h={36}>
        <circle cx="19" cy="6" r="5" fill="#7b83eb" /><circle cx="30" cy="7" r="3.700" fill="#5059c9" />
        <path d="M14 13H28V26H14Z" fill="#7b83eb" /><path d="M26 13H35V24H26Z" fill="#5059c9" />
        <rect x="0" y="8" width="18" height="18" rx="2" fill="#464eb8" />
        <path d="M5 12.500H13M9 12.500V22" stroke="#fff" strokeWidth="2.200" />
        <rect x="11" y="24" width="25" height="11.500" rx="2" fill="#2ae0dc" />
        <text x="23.500" y="33.500" textAnchor="middle" fill="#0a1a20" fontFamily="Open Sans, sans-serif" fontWeight="700" fontSize="10" textLength="21">NEW</text>
      </Svg>
    ),
  },
  {
    icon: (
      <Svg w={32} h={34}>
        <path d="M1 3Q1 0 4 1L29 14Q34 17 29 20L4 33Q1 34 1 31Z" fill="#1f8540" />
        <path d="M1 10H14Q17 10 18 26 16 29 12 24H8Q4 27 1 31Z" fill="#90f2c4" />
        <circle cx="4.500" cy="17" r="1.700" fill="#1d4d35" /><circle cx="12" cy="17" r="1.700" fill="#1d4d35" /><circle cx="8.300" cy="13.500" r="1.700" fill="#1d4d35" /><circle cx="8.300" cy="20.500" r="1.700" fill="#1d4d35" />
      </Svg>
    ),
  },
  {
    running: true,
    icon: (
      <Svg w={36} h={36}>
        <circle cx="18" cy="18" r="18" fill="#5865f2" />
        <path fillRule="evenodd" d="M10 11Q13 9.500 15 9.500L16 11H20L21 9.500Q23 9.500 26 11 29 16 29 23 26 26 23 26L21.500 24H14.500L13 26Q10 26 7 23 7 16 10 11ZM14 16Q12 16 12 18.500T14 21Q16 21 16 18.500T14 16ZM22 16Q20 16 20 18.500T22 21Q24 21 24 18.500T22 16Z" fill="#fff" />
      </Svg>
    ),
  },
  { running: true, icon: <HexLogo w={30} h={34} light /> },
];

const SystemTaskbar = () => (
  <Taskbar>
    <WeatherSlot><Weather /></WeatherSlot>
    <TaskSlot $w={67}>
      <Svg w={35} h={35}>
        <defs><linearGradient id="win" x2="1" y2="1"><stop stopColor="#7ceaff" /><stop offset="1" stopColor="#0a90f5" /></linearGradient></defs>
        <path d="M1 0H17V17H0V1ZM18 0H34L35 1V17H18ZM0 18H17V35H1L0 34ZM18 18H35V34L34 35H18Z" fill="url(#win)" />
      </Svg>
    </TaskSlot>
    <SearchPill>
      <Lens w={23} color="#222" sw={2} />
      <PillText>検索</PillText>
      <SearchArt />
    </SearchPill>
    {taskIcons.map((t, i) => (
      <TaskSlot key={i}>{t.icon}{t.running && <RunMark />}</TaskSlot>
    ))}
    <ActiveSlot><HexLogo w={31} h={35} /><RunMark $active /></ActiveSlot>
    <TrayCell $w={48} $ml={86}><Svg w={17} h={10}><path d="M1 9 8.500 1.500 16 9" stroke="#fff" strokeWidth="2" /></Svg></TrayCell>
    <TrayCell $w={48}>
      <Svg w={24} h={16}>
        <path d="M6 8Q6 0 12 0 18 0 19 6 23 7 23 12H6Z" fill="#a8a8a8" />
        <path d="M5 16Q0 15.500 0 11.500 0 8 4 7.500 9 3 13 8L18 10Q24 8.500 24 12.500T20 16Z" fill="#fff" />
      </Svg>
    </TrayCell>
    <TrayCell $w={48}><Svg w={20} h={24}><path d="M1.500 24 10 1 18.500 24M4.500 16.500H15.500" stroke="#fff" strokeWidth="1.500" /></Svg></TrayCell>
    <TrayCell $w={36} $ml={6}>
      <Svg w={24} h={18}>
        <path d="M1 7Q12-4 23 7" stroke="#5d5d62" strokeWidth="1.800" />
        <path d="M4.500 10Q12 3 19.500 10" stroke="#8f8f93" strokeWidth="1.800" />
        <path d="M7.500 13.200Q12 8.500 16.500 13.200" stroke="#fff" strokeWidth="1.800" />
        <circle cx="12" cy="15.500" r="2.100" fill="#fff" />
      </Svg>
    </TrayCell>
    <TrayCell $w={36}>
      <Svg w={24} h={18}><path d="M1 6H4.500L10 1.300V16.700L4.500 12H1ZM14.500 5 23 13.500M23 5 14.500 13.500" stroke="#fff" strokeWidth="1.600" /></Svg>
    </TrayCell>
    <TrayCell $w={36}>
      <Svg w={24} h={16}>
        <rect x="1" y="1" width="19.500" height="14" rx="3.500" stroke="#fff" strokeWidth="1.600" />
        <rect x="3.500" y="3.500" width="14" height="9" rx="1" fill="#fff" />
        <path d="M22.500 5.500V10.500" stroke="#fff" strokeWidth="2.400" />
      </Svg>
    </TrayCell>
    <Clock>0:12<br />2024/06/28</Clock>
    <TrayCell $w={44}>
      <Svg w={20} h={23}><path d="M10 0Q17.500 0 18 8L18.500 14 20 17V18.500H0V17L1.500 14 2 8Q2.500 0 10 0ZM6 20H14Q13 23 10 23T6 20Z" fill="#9be4fb" /></Svg>
    </TrayCell>
  </Taskbar>
);

export default function App() {
  return (
    <>
      <Global />
      <Screen>
        <TitleBar>
          <HexLogo w={20} h={23} />
          <TitleText>漢字game - Quiz1 - Windows, Mac, Linux - Unity 2023.2.1f1 &lt;DX11&gt;</TitleText>
          <WindowControl><Svg w={16} h={2}><path d="M0 1H16" stroke="#111" strokeWidth="1.200" /></Svg></WindowControl>
          <WindowControl><Svg w={16} h={16}><rect x="1" y="4" width="11" height="11" rx="2" stroke="#111" strokeWidth="1.300" /><path d="M4 1.500H11.500Q14.500 1.500 14.500 4.500V12" stroke="#111" strokeWidth="1.300" /></Svg></WindowControl>
          <WindowControl><Svg w={15} h={15}><path d="M.5 .5 14.500 14.500M14.500 .5 .5 14.500" stroke="#111" strokeWidth="1.300" /></Svg></WindowControl>
        </TitleBar>
        <MenuBar>{menu.map(([m, w]) => <MenuItem key={m} $w={w}>{m}</MenuItem>)}</MenuBar>
        <TopToolbar />
        <Workspace>
          <LeftColumn>
            <TopRow><Hierarchy /><Scene /></TopRow>
            <Project />
          </LeftColumn>
          <Inspector />
        </Workspace>
        <StatusBar>
          <StatusCell><BugIcon slash /></StatusCell>
          <StatusCell>
            <Svg w={20} h={21}>
              <path d="M1 3Q10-2 19 3V6Q10 10 1 6ZM1 9Q10 13 19 9V12Q10 16 1 12ZM1 15Q10 19 19 15V18Q10 23 1 18Z" fill={FG} />
              <path d="M2 0 20 19" stroke="#191919" strokeWidth="2.500" /><path d="M0 1 19 21" stroke={FG} strokeWidth="1.500" />
            </Svg>
          </StatusCell>
          <StatusCell>
            <Svg w={22} h={22}><circle cx="11" cy="11" r="10" stroke={FG} strokeWidth="1.500" /><path d="M6.500 11 10 14.500 15.500 8" stroke={FG} strokeWidth="1.600" /></Svg>
          </StatusCell>
        </StatusBar>
        <SystemTaskbar />
      </Screen>
    </>
  );
}
